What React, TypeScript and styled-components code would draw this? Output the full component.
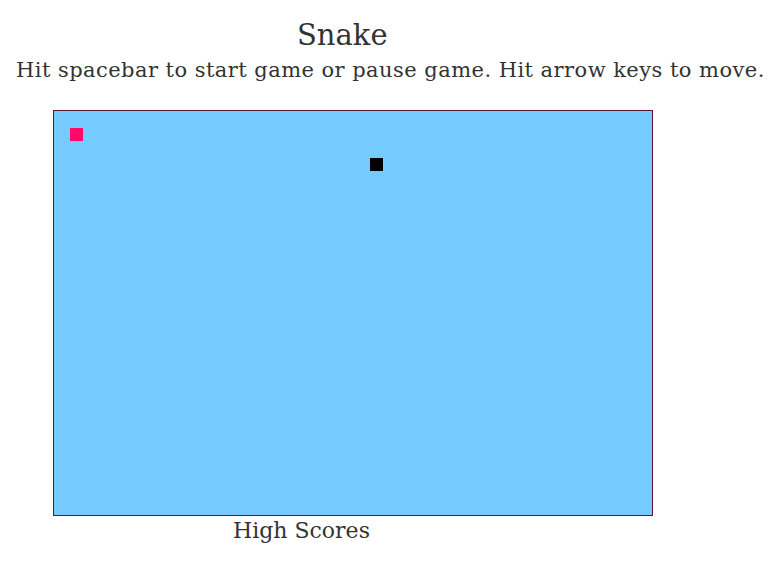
import React from "react";
import styled, { createGlobalStyle } from "styled-components";

const Global = createGlobalStyle`
  html, body { margin: 0; padding: 0; background: #ffffff; }
  body { font-family: "DejaVu Serif", serif; color: #333333; }
`;

const Page = styled.div`
  width: 779px;
  height: 586px;
  display: flex;
  flex-direction: column;
`;

const Title = styled.h1`
  margin: 17px 0 0 0;
  padding-left: 297px;
  font-size: 29px;
  font-weight: 400;
  line-height: 36px;
`;

const Subtitle = styled.p`
  margin: 0;
  padding: 3px 0 0 16px;
  font-size: 21px;
  letter-spacing: 0.45px;
  line-height: 28px;
  white-space: nowrap;
`;

const Board = styled.div`
  position: relative;
  margin: 26px 0 0 53px;
  width: 598px;
  height: 404px;
  border: 1px solid #5a1838;
  background: #75cbfe;
`;

const Cell = styled.div<{ $color: string }>`
  position: absolute;
  width: 13px;
  height: 13px;
  background: ${(p) => p.$color};
`;

const Scores = styled.h2`
  margin: 0;
  padding-left: 233px;
  font-size: 22px;
  font-weight: 400;
  line-height: 30px;
`;

export default function App() {
  return (
    <>
      <Global />
      <Page>
        <Title>Snake</Title>
        <Subtitle>Hit spacebar to start game or pause game. Hit arrow keys to move.</Subtitle>
        <Board>
          <Cell $color="#ff0a66" style={{ left: 16, top: 17 }} />
          <Cell $color="#000000" style={{ left: 316, top: 47 }} />
        </Board>
        <Scores>High Scores</Scores>
      </Page>
    </>
  );
}
